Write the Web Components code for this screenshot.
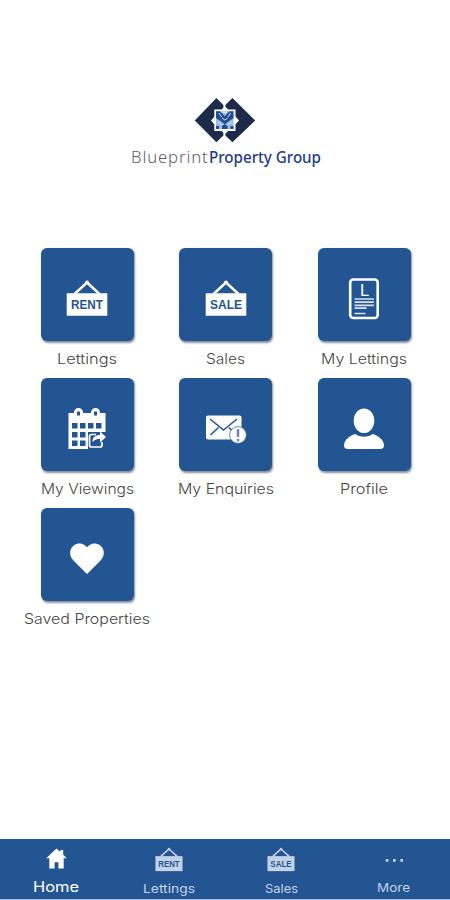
<!DOCTYPE html>
<html lang="en">
  <head>
    <meta charset="UTF-8" />
    <meta name="viewport" content="width=device-width, initial-scale=1.0" />
    <title>Blueprint Property Group</title>
    <style>
      body {
        margin: 0;
        background: #fff;
        font-family: Inter, "Liberation Sans", sans-serif;
        --blue: #245593;
      }
    </style>
  </head>
  <body>
    <app-screen>
      <brand-logo slot="header"></brand-logo>
      <menu-tile icon="rent" label="Lettings" width="60"></menu-tile>
      <menu-tile icon="sale" label="Sales" width="39"></menu-tile>
      <menu-tile icon="document" label="My Lettings" width="86"></menu-tile>
      <menu-tile icon="calendar" label="My Viewings" width="93"></menu-tile>
      <menu-tile icon="mail" label="My Enquiries" width="96"></menu-tile>
      <menu-tile icon="person" label="Profile" width="48"></menu-tile>
      <menu-tile icon="heart" label="Saved Properties" width="126"></menu-tile>
      <nav-item slot="nav" icon="home" label="Home" width="46" active></nav-item>
      <nav-item slot="nav" icon="rent" label="Lettings" width="52"></nav-item>
      <nav-item slot="nav" icon="sale" label="Sales" width="33"></nav-item>
      <nav-item slot="nav" icon="more" label="More" width="33"></nav-item>
    </app-screen>

    <template id="screen-template">
      <style>
        :host {
          display: flex;
          flex-direction: column;
          box-sizing: border-box;
          height: 900px;
          padding-top: 97px;
          overflow: hidden;
        }
        main {
          flex: 1;
          display: grid;
          grid-template-columns: repeat(3, 138.5px);
          grid-auto-rows: 130px;
          align-content: start;
          padding: 81px 0 0 18px;
        }
        nav {
          display: grid;
          grid-template-columns: repeat(4, 1fr);
          height: 60px;
          background: var(--blue);
          border-bottom: 1px solid #a9bdd6;
        }
      </style>
      <slot name="header"></slot>
      <main><slot></slot></main>
      <nav><slot name="nav"></slot></nav>
    </template>

    <template id="logo-template">
      <style>
        :host {
          display: flex;
          flex-direction: column;
          align-items: center;
          height: 70px;
        }
        svg {
          display: block;
        }
        .name {
          font-family: "Noto Sans", "Open Sans", sans-serif;
          font-size: 15.5px;
        }
      </style>
      <svg width="62" height="47" viewBox="0 0 62 47">
        <path fill="#1d2b4b" d="M.8 23.5 22.4 1l7 7v30.500l-7 6.700zM61.200 23.500 38.400 1l-7 7v30.500l7 6.700z" />
        <path fill="#fff" d="M20.300 12.600h7.200l3.400-3 3.400 3h7.200v7l3.500 3.900-3.500 3.700v6.700h-7.200l-3.400 3-3.400-3h-7.200v-6.700L17 23.500l3.300-3.700z" />
        <path fill="#9cbbe0" d="M22 14.300h17.500v17.700H22z" />
        <path fill="#244c95" d="M22 14.300h4l4.800 5 4.700-5h4v7l-4 2.500-4.700 3.500-4.800-3.500-4-2.500zM22 29h3v3h-3zM36.500 29h3v3h-3zM28 29l2.800-2 2.800 2v3H28z" />
        <path fill="none" stroke="#d7e7f7" d="m25 16 2.500 4M36.500 16l-2.500 4M24 25l4 3M37.500 25l-4 3M28.500 15.500h4.500M28 21l2.800 2 2.800-2" />
      </svg>
      <svg class="name" width="196" height="23">
        <text x="4" y="19" textLength="77.500" lengthAdjust="spacingAndGlyphs" fill="#5d6068" font-weight="300" letter-spacing=".8">Blueprint</text>
        <text x="82" y="19" textLength="112" lengthAdjust="spacingAndGlyphs" fill="#1c3d8c" font-weight="500">Property Group</text>
      </svg>
    </template>

    <template id="tile-template">
      <style>
        :host {
          display: flex;
          flex-direction: column;
          align-items: center;
        }
        .tile {
          display: grid;
          justify-items: center;
          align-items: start;
          box-sizing: border-box;
          width: 93px;
          height: 93px;
          padding-top: 27px;
          border-radius: 6px;
          background: var(--blue);
          box-shadow: 1px 1.500px 2px rgba(20, 35, 65, .5);
        }
        fit-label {
          color: #444;
          margin-top: 6.5px;
        }
      </style>
      <div class="tile"><app-icon></app-icon></div>
      <fit-label size="14.3" weight="300"></fit-label>
    </template>

    <template id="nav-template">
      <style>
        :host {
          display: flex;
          flex-direction: column;
          align-items: center;
          padding-top: 5px;
          color: #c3d2e7;
        }
        :host([active]) {
          color: #fff;
        }
        .icon {
          display: grid;
          place-items: center;
          height: 28px;
        }
        app-icon {
          --icon-size: 32px;
        }
        :host([icon="home"]) app-icon {
          --icon-size: 23px;
        }
        fit-label {
          margin-top: 5px;
        }
        :host([active]) fit-label,
        :host([icon="more"]) fit-label {
          margin-top: 4px;
        }
      </style>
      <div class="icon"><app-icon></app-icon></div>
      <fit-label size="12.3" weight="400"></fit-label>
    </template>

    <script>
      // Hanging sign, shared by the rent and sale icons
      const sign = (word) => `
        <path d="M11.500 19 24 7.500 36.500 19" fill="none" stroke="currentColor" stroke-width="2.400"/>
        <circle cx="24" cy="7.500" r="2" fill="currentColor"/>
        <path d="M3.700 18.200h40.600v22.500H3.700z" fill="currentColor"/>
        <text x="24" y="34" text-anchor="middle" textLength="32" lengthAdjust="spacingAndGlyphs"
          font-family="Liberation Sans, sans-serif" font-weight="700" font-size="12.500" fill="var(--blue)">${word}</text>`;

      const icons = {
        rent: sign("RENT"),
        sale: sign("SALE"),
        document: `
          <rect x="10.200" y="4.500" width="27.500" height="38.500" rx="3" fill="none" stroke="currentColor" stroke-width="2.600"/>
          <text x="20" y="20.500" font-family="Liberation Sans, sans-serif" font-size="16.500" fill="currentColor">L</text>
          <path d="M14.500 24h19.500M14.500 27.200h19.500M14.500 30.400h19.500M14.500 33.200h12M14.500 38.500h11" fill="none" stroke="#dae2ef" stroke-width="1.700"/>`,
        calendar: `
          <path d="M5.500 8h37v36h-37z" fill="currentColor"/>
          <path d="M11 9V7.500a4.500 4.500 0 0 1 9 0V9M28 9V7.500a4.500 4.500 0 0 1 9 0V9" fill="currentColor"/>
          <path d="M14 6.500h3v4h-3zM31 6.500h3v4h-3z" fill="var(--blue)"/>
          <path d="M9 18h5.500v5.500H9zM17 18h5.500v5.500H17zM25 18h5.500v5.500H25zM33 18h5.500v5.500H33zM9 27h5.500v5.500H9zM17 27h5.500v5.500H17zM9 35.500h5.500V41H9zM17 35.500h5.500V41H17zM25 27h18v18H25z" fill="var(--blue)"/>
          <path d="M33 29.500h-4.500a2 2 0 0 0-2 2V40a2 2 0 0 0 2 2H37a2 2 0 0 0 2-2v-3" fill="none" stroke="currentColor" stroke-width="1.700"/>
          <path d="M29.500 37c0-5 3-7 7.500-7v-3.500l6 5.500-6 5.500V34c-3 0-5 .500-7.500 3z" fill="currentColor"/>`,
        mail: `
          <rect x="4" y="10.500" width="35.500" height="24" rx="2" fill="currentColor"/>
          <path d="m8 14 13.500 11L35 14M8.500 30l8-7.500M27 22.500l4 4" fill="none" stroke="var(--blue)" stroke-width="1.600"/>
          <circle cx="36" cy="30" r="8.400" fill="currentColor" stroke="var(--blue)" stroke-width=".700"/>
          <path d="M36 24v8M36 33.800v2.700" stroke="#7189b0" stroke-width="2.500"/>`,
        person: `
          <ellipse cx="24" cy="15.700" rx="10.300" ry="12.300" fill="currentColor"/>
          <path d="M15.500 29c4 3.500 13 3.500 17 0 7 2 11.500 6.500 11.500 11.500 0 2.500-1.500 3.500-4 3.500H8c-2.500 0-4-1-4-3.500C4 35.500 8.500 31 15.500 29z" fill="currentColor"/>`,
        heart: `<path d="M24 39 10.500 25.500C5.500 20.300 6.500 13.500 11 10.200c4.300-3 10-1.900 13 2 3-3.900 8.700-5 13-2 4.500 3.300 5.500 10.100.5 15.300z" fill="currentColor"/>`,
        home: `<path d="M24 3 2.500 23.500H9V45h11V32h8v13h11V23.500h6.500L38 16V6h-6v4.500z" fill="currentColor"/>`,
        more: `<path d="M11.500 22.500h4v4h-4zM22.500 22.500h4v4h-4zM33.500 22.500h4v4h-4z" fill="currentColor"/>`,
      };

      class AppScreen extends HTMLElement {
        constructor() {
          super();
          this.attachShadow({ mode: "open" });
          this.shadowRoot.appendChild(document.getElementById("screen-template").content.cloneNode(true));
        }
      }

      class BrandLogo extends HTMLElement {
        constructor() {
          super();
          this.attachShadow({ mode: "open" });
          this.shadowRoot.appendChild(document.getElementById("logo-template").content.cloneNode(true));
        }
      }

      class AppIcon extends HTMLElement {
        constructor() {
          super();
          this.attachShadow({ mode: "open" });
        }

        set name(value) {
          this.shadowRoot.innerHTML = `
            <style>
              :host { display: block; color: inherit; }
              svg { display: block; width: var(--icon-size, 48px); height: var(--icon-size, 48px); }
            </style>
            <svg viewBox="0 0 48 48">${icons[value]}</svg>`;
        }
      }

      // One line of text stretched to a given width
      class FitLabel extends HTMLElement {
        constructor() {
          super();
          this.attachShadow({ mode: "open" });
        }

        show(text, width) {
          const size = this.getAttribute("size");
          this.shadowRoot.innerHTML = `
            <style>
              :host { display: block; }
              svg { display: block; overflow: visible; }
            </style>
            <svg width="${width}" height="21">
              <text y="16" textLength="${width}" lengthAdjust="spacingAndGlyphs" fill="currentColor"
                font-size="${size}" font-weight="${this.getAttribute("weight")}">${text}</text>
            </svg>`;
        }
      }

      class MenuTile extends HTMLElement {
        constructor() {
          super();
          this.attachShadow({ mode: "open" });
          this.shadowRoot.appendChild(document.getElementById("tile-template").content.cloneNode(true));
        }

        connectedCallback() {
          const icon = this.shadowRoot.querySelector("app-icon");
          icon.name = this.getAttribute("icon");
          icon.style.color = "#fff";
          this.shadowRoot.querySelector("fit-label").show(this.getAttribute("label"), this.getAttribute("width"));
        }
      }

      class NavItem extends HTMLElement {
        constructor() {
          super();
          this.attachShadow({ mode: "open" });
          this.shadowRoot.appendChild(document.getElementById("nav-template").content.cloneNode(true));
        }

        connectedCallback() {
          this.shadowRoot.querySelector("app-icon").name = this.getAttribute("icon");
          const label = this.shadowRoot.querySelector("fit-label");
          if (this.hasAttribute("active")) label.setAttribute("size", "14.3");
          label.show(this.getAttribute("label"), this.getAttribute("width"));
        }
      }

      customElements.define("app-icon", AppIcon);
      customElements.define("fit-label", FitLabel);
      customElements.define("app-screen", AppScreen);
      customElements.define("brand-logo", BrandLogo);
      customElements.define("menu-tile", MenuTile);
      customElements.define("nav-item", NavItem);
    </script>
  </body>
</html>
